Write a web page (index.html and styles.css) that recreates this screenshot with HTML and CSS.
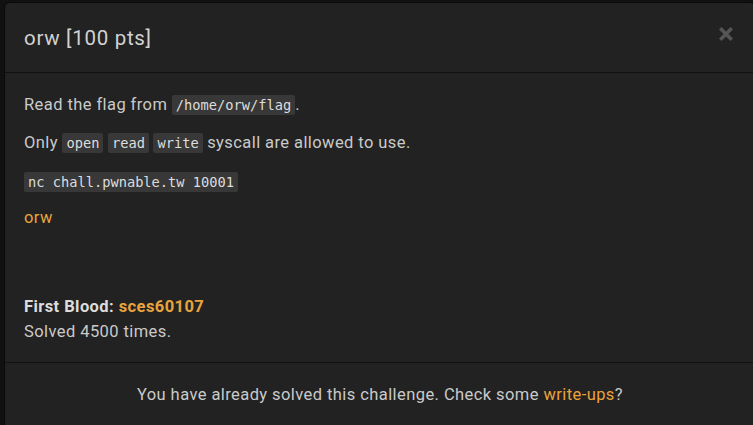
FILE: index.html
```html
<!DOCTYPE html>
<html>
<head>
<meta charset="utf-8">
<link rel="stylesheet" href="styles.css">
</head>
<body>
<div class="modal">
  <div class="modal-header">
    <h4 class="modal-title">orw [100 pts]</h4>
    <button class="close" aria-label="Close">
      <svg width="14" height="14" viewBox="0 0 14 14"><path d="M2.5 2.5 L11.5 11.5 M11.5 2.5 L2.5 11.5" stroke="#555" stroke-width="3.6" stroke-linecap="square" fill="none"/></svg>
    </button>
  </div>
  <div class="modal-body">
    <p class="p1">Read the flag from <code>/home/orw/flag</code>.</p>
    <p class="p2">Only <code>open</code> <code>read</code> <code>write</code> syscall are allowed to use.</p>
    <p class="p3"><code>nc chall.pwnable.tw 10001</code></p>
    <p class="p4"><a href="#">orw</a></p>
    <div class="stats">
      <div><strong>First Blood: <a href="#">sces60107</a></strong></div>
      <div>Solved 4500 times.</div>
    </div>
  </div>
  <div class="modal-footer">
    You have already solved this challenge. Check some <a href="#">write-ups</a>?
  </div>
</div>
</body>
</html>
```

FILE: styles.css
```css
html, body {
  margin: 0;
  padding: 0;
  background: #111;
  overflow: hidden;
  height: 425px;
}
.modal {
  margin: 2px 0 0 4px;
  width: 750px;
  height: 460px;
  background: #222;
  border: 1px solid #0a0a0a;
  border-radius: 6px;
  font-family: Roboto, "Liberation Sans", sans-serif;
  font-size: 16.5px;
  letter-spacing: 0.42px;
  line-height: 24px;
  color: #cacaca;
}
a {
  color: #e9a43c;
  text-decoration: none;
}
.modal-header {
  display: flex;
  justify-content: space-between;
  align-items: flex-start;
  padding: 24px 22px 23px 19px;
  border-bottom: 1px solid #111;
}
.modal-title {
  margin: 0;
  font-size: 20.5px;
  letter-spacing: 0.7px;
  line-height: 22px;
  font-weight: 400;
  color: #d2d2d2;
}
.close {
  background: none;
  border: 0;
  padding: 0;
  margin-top: 0;
  line-height: 0;
}
.modal-body {
  padding: 20px 19px 18px 19px;
}
.modal-body p {
  margin: 0;
}
.p1 { margin-bottom: 14px !important; }
.p2 { margin-bottom: 15px !important; }
.p3 { margin-bottom: 12px !important; }
.p4 { margin-bottom: 64px !important; }
code {
  font-family: "DejaVu Sans Mono", "Liberation Mono", monospace;
  font-size: 13.7px;
  letter-spacing: 0;
  background: #383838;
  color: #ddd;
  padding: 2px 4px;
  border-radius: 2px;
}
.stats {
  line-height: 25px;
}
.stats strong {
  color: #dcdcdc;
}
.modal-footer {
  padding: 20px 19px;
  border-top: 1px solid #111;
  text-align: center;
}
```
